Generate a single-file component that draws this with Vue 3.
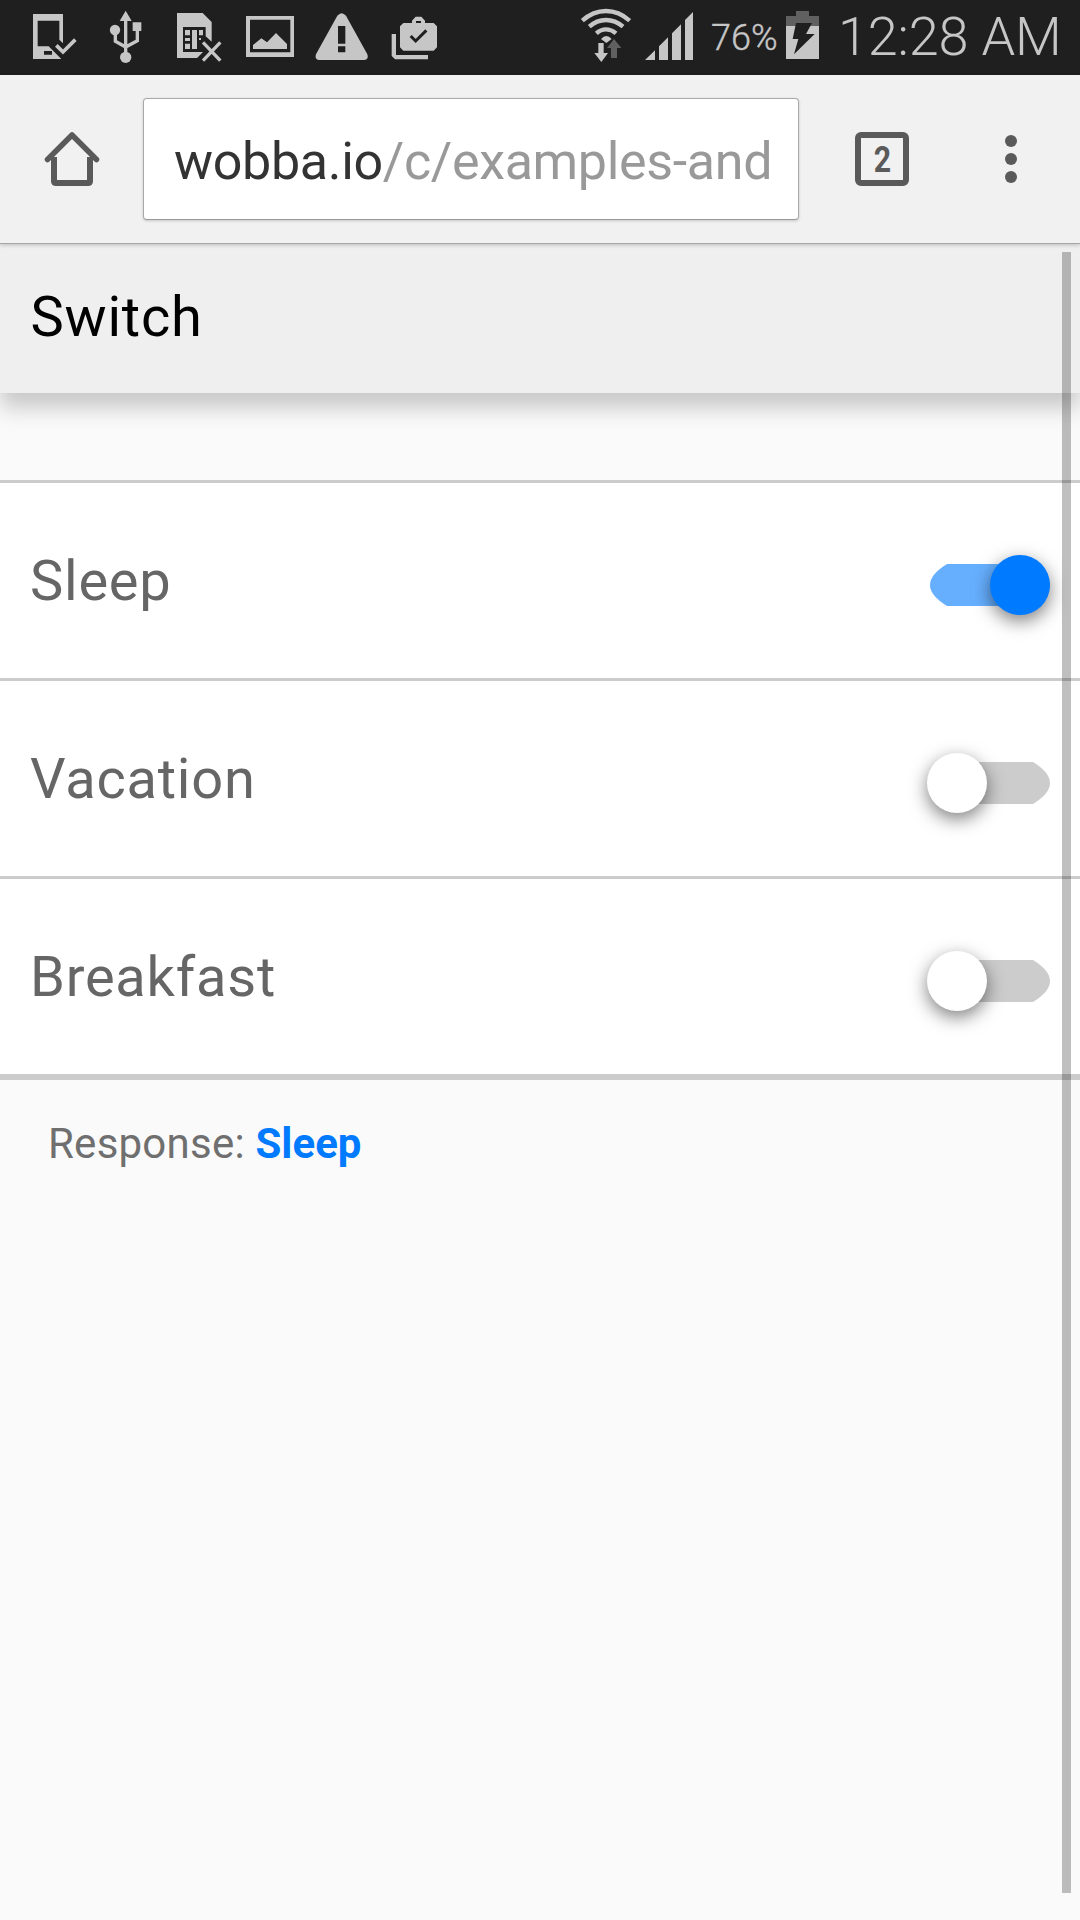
<script setup>
import { ref, computed } from 'vue'

const options = ref([
  { label: 'Sleep', on: true },
  { label: 'Vacation', on: false },
  { label: 'Breakfast', on: false }
])
const response = computed(() => options.value.filter(o => o.on).map(o => o.label).join(', '))
</script>

<template>
  <div class="screen">
    <div class="status">
      <div class="notifications">
        <svg width="44" height="75" viewBox="99 0 132 225">
          <path fill-rule="evenodd" d="M99 42H189V130L178 119V62H113V139H146L184 177H99ZM132 153V164H156V153Z" />
          <path class="line" stroke-width="11" d="M169 136L189 156L226 119" />
        </svg>
        <svg width="33" height="75" viewBox="327 0 99 225">
          <path d="M377 32L395 63H359ZM398 67H424V93H398Z" />
          <circle cx="345" cy="90" r="15.500" />
          <circle cx="377" cy="172" r="17" />
          <path class="line" stroke-width="10" d="M377 60V172M346 90V124L377 141L412 122V90" />
        </svg>
        <svg width="46" height="75" viewBox="528 0 138 225">
          <path fill-rule="evenodd" d="M531 39H608L635 66V125L617 109V81H549V156H609L591 174H531Z" />
          <path d="M555 90H570V106H555ZM576 90H591V147H576ZM597 90H609V106H597ZM555 114H570V123H555ZM555 131H570V147H555ZM597 114H603V120H597Z" />
          <path class="line" stroke-width="10" d="M609 127L661 182M661 127L609 182" />
        </svg>
        <svg width="48" height="75" viewBox="48 0 144 225">
          <path fill-rule="evenodd" d="M48 48H192V171H48ZM60 59V157H181V59Z" />
          <path d="M69 135L94 115L111 127L138 99L171 132V147H69Z" />
        </svg>
        <svg width="53" height="75" viewBox="255 0 159 225">
          <path fill-rule="evenodd" d="M322 47Q335 32 348 47L412 163Q417 179 402 180H268Q253 179 258 163ZM324 78V131H346V78ZM324 139V157H346V139Z" />
        </svg>
        <svg width="46" height="75" viewBox="483 0 138 225">
          <path fill-rule="evenodd" d="M520 69H546V62L557 50H574L585 62V69H611L621 79V142L611 152H520L510 142V79ZM558 63V69H573V63Z" />
          <path d="M485 102H498V165H594V178H495L485 168Z" />
          <path class="tick" d="M542 108L557 123L589 91" />
        </svg>
      </div>
      <div class="signals">
        <svg class="wifi" width="51" height="75" viewBox="60 0 153 225">
          <path class="line" stroke-width="13" d="M67 62Q99 33 138 33T209 62M88 80Q110 60 138 60T189 80M109 100Q122 88 138 88T168 100" />
          <path d="M123 117Q139 99 155 117L139 129Z" />
          <path d="M115 129H131V159H144L124 186L103 159H115Z" />
          <path class="dim" d="M162 117L184 144H171V174H153V144H141Z" />
        </svg>
        <svg class="bars" width="49" height="75" viewBox="255 0 147 225">
          <path d="M255 180L285 151V180ZM297 139L324 112V180H297ZM336 100L363 73V180H336ZM375 60L399 36V180H375Z" />
        </svg>
        <span class="percent">76%</span>
        <svg class="battery" width="35" height="75" viewBox="675 0 105 225">
          <path class="dim" d="M678 48H708V33H747V48H777V78H678Z" />
          <path d="M678 78H777V177H678Z" />
          <path class="bolt" d="M708 69H756L738 102H764L702 163L715 117H698Z" />
        </svg>
        <span class="clock">12:28 AM</span>
      </div>
    </div>

    <div class="toolbar">
      <svg class="home" width="60" height="60" viewBox="42 129 60 60">
        <path d="M54 157V181Q54 183 56 183H88Q90 183 90 181V157" />
        <path class="roof" d="M47.500 159.500L72 135L96.500 159.500" />
      </svg>
      <div class="omnibox">
        <div class="url">wobba.io<span>/c/examples-and</span></div>
      </div>
      <div class="tabs"><span>2</span></div>
      <div class="menu"><i></i><i></i><i></i></div>
    </div>

    <div class="page">
      <header class="header">Switch</header>
      <ul class="list">
        <li v-for="o in options" :key="o.label" @click="o.on = !o.on">
          <span>{{ o.label }}</span>
          <div class="switch" :class="{ on: o.on }">
            <svg width="120" height="42" viewBox="0 0 120 42">
              <path d="M17 0H103Q137 21 103 42H17Q-17 21 17 0Z" />
            </svg>
            <b class="knob"></b>
          </div>
        </li>
      </ul>
      <p class="response">Response: <b>{{ response }}</b></p>
      <div class="scrollbar"></div>
    </div>
  </div>
</template>

<style>
body { background: #fafafa; }
</style>

<style scoped>
.screen {
  width: 1080px;
  height: 1920px;
  overflow: hidden;
  display: flex;
  flex-direction: column;
  background: #fafafa;
  font-family: Roboto, "Liberation Sans", sans-serif;
}
svg { display: block; flex: none; }

.status {
  flex: none;
  height: 75px;
  display: flex;
  justify-content: space-between;
  background: #1f1f1f;
  color: #c6c6c6;
}
.status svg { fill: #c6c6c6; }
.status .line { fill: none; stroke: #c6c6c6; }
.status .tick { fill: none; stroke: #1f1f1f; stroke-width: 9px; }
.status .dim { fill: #606060; }
.status .bolt { fill: #1f1f1f; }
.notifications { display: flex; padding-left: 33px; }
.notifications svg:nth-child(2) { margin-left: 32px; }
.notifications svg:nth-child(3) { margin-left: 34px; }
.notifications svg:nth-child(4) { margin-left: 24px; }
.notifications svg:nth-child(5) { margin-left: 21px; }
.notifications svg:nth-child(6) { margin-left: 23px; }
.signals { display: flex; width: 500px; white-space: nowrap; }
.bars { margin-left: 14px; }
.percent {
  width: 74px;
  margin-left: 17px;
  font-size: 36px;
  line-height: 76px;
  font-weight: 300;
  -webkit-text-stroke: .4px #c6c6c6;
}
.clock {
  margin-left: 18px;
  font-size: 54px;
  line-height: 73px;
  font-weight: 300;
  letter-spacing: -.15px;
}

.toolbar {
  position: relative;
  z-index: 2;
  flex: none;
  box-sizing: border-box;
  height: 169px;
  display: flex;
  align-items: flex-start;
  padding-left: 42px;
  background: #f1f1f1;
  border-bottom: 1px solid #a6a6a6;
  box-shadow: 0 1px 4px rgba(0, 0, 0, .22);
}
.home {
  margin-top: 54px;
  fill: none;
  stroke: #5a5a5a;
  stroke-width: 6px;
}
.roof { stroke-width: 5.5px; stroke-linecap: round; stroke-linejoin: round; }
.omnibox {
  box-sizing: border-box;
  width: 656px;
  height: 122px;
  margin: 23px 0 0 41px;
  padding: 3px 29px 0 30px;
  background: #fff;
  border: 1px solid #a9a9a9;
  border-bottom-color: #999;
  border-radius: 4px;
  box-shadow: 0 1px 3px rgba(0, 0, 0, .18);
}
.url {
  overflow: hidden;
  white-space: nowrap;
  font-size: 52px;
  line-height: 120px;
  letter-spacing: -.33px;
  color: #333;
}
.url span { color: #999; }
.tabs {
  box-sizing: border-box;
  width: 54px;
  height: 54px;
  margin: 57px 0 0 56px;
  border: 6px solid #5a5a5a;
  border-radius: 6px;
  text-align: center;
  font-size: 36px;
  line-height: 44px;
  font-weight: 700;
  color: #5a5a5a;
}
.tabs span { display: inline-block; transform: scaleX(.84); }
.menu {
  display: flex;
  flex-direction: column;
  gap: 6px;
  margin: 60px 0 0 96px;
}
.menu i { width: 12px; height: 12px; border-radius: 50%; background: #5a5a5a; }

.page { position: relative; flex: 1; }
.header {
  position: relative;
  height: 149px;
  padding-left: 30.5px;
  font-size: 56px;
  line-height: 146px;
  box-sizing: border-box;
  background: #efefef;
  color: #000;
  letter-spacing: .8px;
  box-shadow: 0 14px 22px rgba(0, 0, 0, .21);
}
.list {
  list-style: none;
  margin: 87px 0 0;
  padding: 0;
  border-bottom: 3px solid #ccc;
}
.list li {
  box-sizing: border-box;
  height: 198px;
  display: flex;
  justify-content: space-between;
  align-items: center;
  padding: 0 30px;
  border-top: 3px solid #ccc;
  background: #fff;
  font-size: 56px;
  color: #666;
  letter-spacing: .77px;
}
.list li:last-child { height: 201px; border-bottom: 3px solid #ccc; }
.switch { position: relative; width: 120px; height: 42px; margin-top: 9px; fill: #ccc; }
.switch.on { fill: #66afff; }
.knob {
  position: absolute;
  left: -3px;
  top: -9px;
  width: 60px;
  height: 60px;
  border-radius: 50%;
  background: #fff;
  box-shadow: 0 6px 18px rgba(0, 0, 0, .5);
}
.on .knob { left: 60px; background: #007aff; }
.response {
  margin: 38px 0 0 48px;
  font-size: 42px;
  line-height: 51px;
  letter-spacing: .24px;
  color: #6f6f6f;
}
.response b { color: #007aff; letter-spacing: 0; }
.scrollbar {
  position: absolute;
  top: 8px;
  right: 9px;
  width: 9px;
  height: 1641px;
  background: rgba(0, 0, 0, .25);
}
</style>
